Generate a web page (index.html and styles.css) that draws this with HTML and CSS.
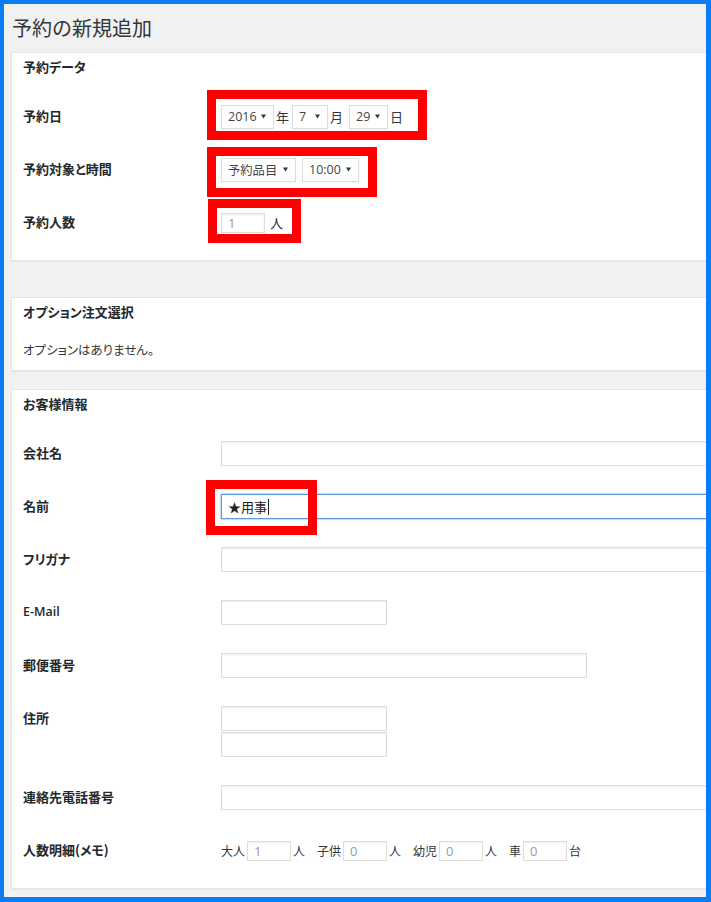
FILE: index.html
```html
<!DOCTYPE html>
<html lang="ja">
<head>
<meta charset="utf-8">
<title>予約の新規追加</title>
<link rel="stylesheet" href="styles.css">
</head>
<body>
<div class="frame">
  <h1 class="title">予約の新規追加</h1>

  <section class="panel panel-data">
    <h2 class="hndle">予約データ</h2>
    <div class="row">
      <div class="lbl">予約日</div>
      <div class="ctl">
        <span class="mark m1">
          <span class="sel w53"><span>2016</span><svg class="arr" width="5" height="5" viewBox="0 0 6 5"><polygon points="0,0 6,0 3,5"/></svg></span>
          <span class="unit">年</span>
          <span class="sel w36"><span>7</span><svg class="arr" width="5" height="5" viewBox="0 0 6 5"><polygon points="0,0 6,0 3,5"/></svg></span>
          <span class="unit">月</span>
          <span class="sel w39 gapl"><span>29</span><svg class="arr" width="5" height="5" viewBox="0 0 6 5"><polygon points="0,0 6,0 3,5"/></svg></span>
          <span class="unit">日</span>
        </span>
      </div>
    </div>
    <div class="row">
      <div class="lbl">予約対象と時間</div>
      <div class="ctl">
        <span class="mark m2">
          <span class="sel w75 jp"><span>予約品目</span><svg class="arr" width="5" height="5" viewBox="0 0 6 5"><polygon points="0,0 6,0 3,5"/></svg></span>
          <span class="sel w57 gap6"><span>10:00</span><svg class="arr" width="5" height="5" viewBox="0 0 6 5"><polygon points="0,0 6,0 3,5"/></svg></span>
        </span>
      </div>
    </div>
    <div class="row">
      <div class="lbl">予約人数</div>
      <div class="ctl">
        <span class="mark m3">
          <span class="small-input">1</span>
          <span class="unit u-person">人</span>
        </span>
      </div>
    </div>
  </section>

  <section class="panel panel-opt">
    <h2 class="hndle">オプション注文選択</h2>
    <p class="note">オプションはありません。</p>
  </section>

  <section class="panel panel-cust">
    <h2 class="hndle">お客様情報</h2>
    <div class="row">
      <div class="lbl">会社名</div>
      <div class="ctl"><span class="txt wide"></span></div>
    </div>
    <div class="row">
      <div class="lbl">名前</div>
      <div class="ctl">
        <span class="mark m4"><span class="txt wide focus">★用事<span class="caret"></span></span></span>
      </div>
    </div>
    <div class="row">
      <div class="lbl">フリガナ</div>
      <div class="ctl"><span class="txt wide"></span></div>
    </div>
    <div class="row">
      <div class="lbl latin">E-Mail</div>
      <div class="ctl"><span class="txt w165"></span></div>
    </div>
    <div class="row">
      <div class="lbl">郵便番号</div>
      <div class="ctl"><span class="txt w365"></span></div>
    </div>
    <div class="row">
      <div class="lbl">住所</div>
      <div class="ctl stack">
        <span class="txt w165"></span>
        <span class="txt w165"></span>
      </div>
    </div>
    <div class="row">
      <div class="lbl">連絡先電話番号</div>
      <div class="ctl"><span class="txt wide"></span></div>
    </div>
    <div class="row">
      <div class="lbl">人数明細(メモ)</div>
      <div class="ctl memo">
        <span class="grp"><span class="t">大人</span><span class="small-input">1</span><span class="t">人</span></span>
        <span class="grp"><span class="t">子供</span><span class="small-input">0</span><span class="t">人</span></span>
        <span class="grp"><span class="t">幼児</span><span class="small-input">0</span><span class="t">人</span></span>
        <span class="grp"><span class="t">車</span><span class="small-input">0</span><span class="t">台</span></span>
      </div>
    </div>
  </section>
</div>
</body>
</html>
```

FILE: styles.css
```css
html, body {
  margin: 0;
  padding: 0;
  background: #0b7cf4;
}

body {
  font-family: "Open Sans", "Noto Sans CJK JP", sans-serif;
  color: #23282d;
  font-feature-settings: "palt";
}

.frame {
  box-sizing: border-box;
  width: 711px;
  height: 902px;
  border-style: solid;
  border-color: #0b7cf4;
  border-width: 4px 5px 5px 4px;
  background: #f1f1f1;
  overflow: hidden;
}

.title {
  margin: 0;
  height: 48px;
  line-height: 47px;
  padding-left: 8px;
  font-family: "Noto Sans CJK JP", sans-serif;
  font-size: 20px;
  font-weight: 400;
  color: #32373c;
  font-feature-settings: normal;
}

.panel {
  box-sizing: border-box;
  width: 760px;
  margin-left: 7px;
  background: #fff;
  border: 1px solid #e5e5e5;
  box-shadow: 0 1px 1px rgba(0, 0, 0, 0.04);
  padding: 0 0 11px 11px;
}

.panel-data { margin-bottom: 36px; }
.panel-opt { margin-bottom: 18px; padding-bottom: 12px; }

.hndle {
  margin: 0;
  padding: 6px 0 15px;
  line-height: 16px;
  font-size: 13px;
  font-weight: 700;
  font-family: "Noto Sans CJK JP", sans-serif;
  color: #23282d;
}

.note {
  margin: 0;
  padding-top: 7px;
  line-height: 16px;
  font-size: 12.5px;
  font-family: "Noto Sans CJK JP", sans-serif;
  color: #32373c;
}

.row {
  display: grid;
  grid-template-columns: 198px 1fr;
  padding: 14px 0;
}

.lbl {
  line-height: 24px;
  height: 25px;
  font-size: 13px;
  font-weight: 700;
  font-family: "Noto Sans CJK JP", sans-serif;
  color: #23282d;
}

.lbl.latin {
  font-family: "Open Sans", sans-serif;
  font-weight: 600;
  font-size: 12.5px;
}

.ctl {
  display: flex;
  align-items: center;
  min-height: 25px;
}

.ctl.stack {
  flex-direction: column;
  align-items: flex-start;
  gap: 1px;
}

.mark {
  position: relative;
  display: inline-flex;
  align-items: center;
  height: 25px;
}

.mark::after {
  content: "";
  position: absolute;
  box-sizing: border-box;
  border: 9px solid #ff0000;
  z-index: 2;
  pointer-events: none;
}

.m1::after { left: -14px; top: -14px; width: 220px; height: 50px; }
.m2::after { left: -14px; top: -10px; width: 170px; height: 50px; }
.m3::after { left: -13px; top: -11px; width: 93px; height: 44px; }
.m4::after { left: -15px; top: -14px; width: 111px; height: 55px; }

.sel {
  box-sizing: border-box;
  display: inline-flex;
  align-items: center;
  justify-content: space-between;
  height: 24px;
  padding: 0 7px 0 6px;
  border: 1px solid #dddddd;
  background: #fff;
  box-shadow: 0 1px 2px rgba(0, 0, 0, 0.05);
  font-size: 12.5px;
  color: #444;
  font-family: "Open Sans", "Noto Sans CJK JP", sans-serif;
}

.sel.jp { font-size: 12.3px; }

.sel .arr { fill: #32373c; flex: none; }

.w53 { width: 53px; }
.w36 { width: 36px; }
.w39 { width: 39px; }
.w75 { width: 75px; }
.w57 { width: 57px; }
.gap6 { margin-left: 6px; }
.gapl { margin-left: 3px; }

.unit {
  font-size: 13px;
  font-family: "Noto Sans CJK JP", sans-serif;
  color: #32373c;
  margin: 0 3px 0 2px;
}

.u-person { margin-left: 5px; }

.small-input {
  box-sizing: border-box;
  display: inline-flex;
  align-items: center;
  width: 44px;
  height: 20px;
  padding-left: 6px;
  border: 1px solid #dddddd;
  background: #fff;
  box-shadow: inset 0 1px 2px rgba(0, 0, 0, 0.07);
  font-size: 13px;
  color: #9a9a9a;
  font-family: "Open Sans", sans-serif;
}

.txt {
  box-sizing: border-box;
  display: inline-flex;
  align-items: center;
  height: 25px;
  padding-left: 6px;
  border: 1px solid #dddddd;
  background: #fff;
  box-shadow: inset 0 1px 2px rgba(0, 0, 0, 0.07);
  font-size: 13px;
  color: #32373c;
  font-family: "Noto Sans CJK JP", sans-serif;
}

.txt.wide { width: 520px; }
.txt.w165 { width: 166px; }
.txt.w365 { width: 366px; }

.txt.focus {
  border-color: #5b9dd9;
  box-shadow: 0 0 2px rgba(30, 140, 190, 0.8);
  color: #222;
}

.caret {
  display: inline-block;
  width: 1px;
  height: 16px;
  background: #222;
  margin-left: 1px;
}

.memo {
  gap: 12px;
}

.grp {
  display: inline-flex;
  align-items: center;
}

.grp .t {
  font-size: 12px;
  font-family: "Noto Sans CJK JP", sans-serif;
  color: #32373c;
}

.grp .small-input { margin: 0 2px; }
```
